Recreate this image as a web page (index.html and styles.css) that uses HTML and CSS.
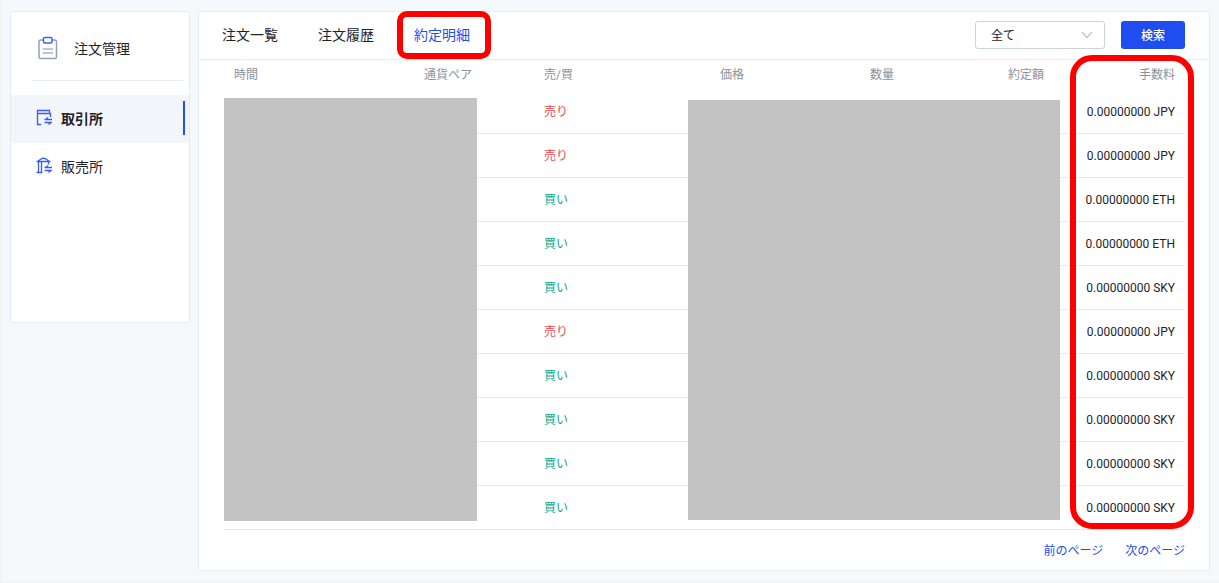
FILE: index.html
```html
<!DOCTYPE html>
<html lang="ja">
<head>
  <meta charset="UTF-8">
  <title>約定明細</title>
  <link rel="stylesheet" href="styles.css">
</head>
<body>

<div class="page">
  <aside class="sidebar">
    <div class="sidebar-title">
      <svg width="20" height="24" viewBox="0 0 20 24" fill="none" stroke-width="1.5">
        <path d="M6 4H2.500Q1 4 1 5.500V21Q1 22.500 2.500 22.500H17Q18.500 22.500 18.500 21V5.500Q18.500 4 17 4H14" stroke="#8fa2b8"/>
        <path d="M4.500 13H15M4.500 17H15" stroke="#a9b8c8"/>
        <rect x="5.500" y="1.500" width="8.500" height="5.500" rx="1.500" stroke="#3f60f5"/>
      </svg>
      <span>注文管理</span>
    </div>
    <nav class="sidebar-nav">
      <a href="#" class="nav-item active">
        <svg width="16" height="18" viewBox="0 0 16 18" fill="none" stroke="#3a5cf5" stroke-width="1.3">
          <path d="M5 15.500H1.500V1.500H13.500V4.500M1.500 4.500H14.500V8"/>
          <path d="M8.500 10.500H16M8.500 13.500H16M9.500 10.500L12 8.500M15 13.500L12.500 15.500"/>
        </svg>
        <span>取引所</span>
      </a>
      <a href="#" class="nav-item">
        <svg width="16" height="18" viewBox="0 0 16 18" fill="none" stroke="#3a5cf5" stroke-width="1.3">
          <path d="M0.500 4.500H14.500M1.500 4.500L5 2Q7.500 0.500 10 2L13.500 4.500M2.500 4.500V15.500M5.500 4.500V15.500M0.500 15.500H6.500M12.500 4.500V7.500"/>
          <path d="M8.500 10.500H16M8.500 13.500H16M9.500 10.500L12 8.500M15 13.500L12.500 15.500"/>
        </svg>
        <span>販売所</span>
      </a>
    </nav>
  </aside>

  <main class="content">
    <div class="toolbar">
      <div class="tabs">
        <a href="#" class="tab">注文一覧</a>
        <a href="#" class="tab">注文履歴</a>
        <a href="#" class="tab active">約定明細</a>
      </div>
      <form class="filter">
        <div class="select-box">
          <select aria-label="通貨ペア">
            <option>全て</option>
          </select>
          <svg class="arrow" width="12" height="8" viewBox="0 0 12 8" fill="none" stroke="#c0c4cc" stroke-width="1.3">
            <path d="M1 1L6 6.500L11 1"/>
          </svg>
        </div>
        <button type="button">検索</button>
      </form>
    </div>

    <div class="orders">
      <table>
        <colgroup>
          <col class="col-time">
          <col class="col-pair">
          <col class="col-side">
          <col class="col-price">
          <col class="col-amount">
          <col class="col-total">
          <col class="col-fee">
        </colgroup>
        <thead>
          <tr>
            <th>時間</th>
            <th>通貨ペア</th>
            <th>売/買</th>
            <th class="right">価格</th>
            <th class="right">数量</th>
            <th class="right">約定額</th>
            <th class="right">手数料</th>
          </tr>
        </thead>
        <tbody>
          <tr><td></td><td></td><td class="sell">売り</td><td></td><td></td><td></td><td class="right">0.00000000 JPY</td></tr>
          <tr><td></td><td></td><td class="sell">売り</td><td></td><td></td><td></td><td class="right">0.00000000 JPY</td></tr>
          <tr><td></td><td></td><td class="buy">買い</td><td></td><td></td><td></td><td class="right">0.00000000 ETH</td></tr>
          <tr><td></td><td></td><td class="buy">買い</td><td></td><td></td><td></td><td class="right">0.00000000 ETH</td></tr>
          <tr><td></td><td></td><td class="buy">買い</td><td></td><td></td><td></td><td class="right">0.00000000 SKY</td></tr>
          <tr><td></td><td></td><td class="sell">売り</td><td></td><td></td><td></td><td class="right">0.00000000 JPY</td></tr>
          <tr><td></td><td></td><td class="buy">買い</td><td></td><td></td><td></td><td class="right">0.00000000 SKY</td></tr>
          <tr><td></td><td></td><td class="buy">買い</td><td></td><td></td><td></td><td class="right">0.00000000 SKY</td></tr>
          <tr><td></td><td></td><td class="buy">買い</td><td></td><td></td><td></td><td class="right">0.00000000 SKY</td></tr>
          <tr><td></td><td></td><td class="buy">買い</td><td></td><td></td><td></td><td class="right">0.00000000 SKY</td></tr>
        </tbody>
      </table>
      <div class="mask mask-left"></div>
      <div class="mask mask-right"></div>
      <div class="fee-frame"></div>
    </div>

    <div class="pager">
      <a href="#">前のページ</a>
      <a href="#">次のページ</a>
    </div>
  </main>
</div>

</body>
</html>
```
FILE: styles.css
```css
* {
  box-sizing: border-box;
}
body {
  margin: 0;
  font-family: Roboto, "Noto Sans CJK JP", sans-serif;
  font-size: 12px;
  color: #1e2329;
  background-color: #f5f9fc;
}
a {
  color: inherit;
  text-decoration: none;
}
.page {
  display: flex;
  align-items: flex-start;
  gap: 8px;
  min-height: 100vh;
  padding: 11px 9px 10px 8px;
  border-left: 2px solid #f3f3f3;
  border-bottom: 2px solid #f3f3f3;
}

/* sidebar */
.sidebar {
  flex: 0 0 180px;
  min-height: 312px;
  background-color: #fff;
  border: 1px solid #e6ebf1;
  border-radius: 2px;
}
.sidebar-title {
  display: flex;
  align-items: center;
  gap: 16px;
  height: 69px;
  margin: 0 6px 14px 21px;
  padding-left: 6px;
  padding-top: 3px;
  font-size: 14px;
  border-bottom: 1px solid #e6ebf5;
}
.nav-item {
  display: flex;
  align-items: center;
  gap: 9px;
  height: 48px;
  padding: 0 4px 3px 25px;
  font-size: 14px;
}
.nav-item.active {
  font-weight: bold;
  background-color: #f2f5fa;
}
.nav-item.active::after {
  content: "";
  width: 2px;
  height: 34px;
  margin-left: auto;
  background-color: #1f4df0;
}

/* main card */
.content {
  flex: 1;
  background-color: #fff;
  border: 1px solid #e6ebf1;
  border-radius: 2px;
}
.toolbar {
  display: flex;
  align-items: center;
  justify-content: space-between;
  height: 48px;
  padding: 0 24px 2px 23px;
  border-bottom: 1px solid #e6ebf1;
}
.tabs {
  display: flex;
  gap: 40px;
}
.tab {
  position: relative;
  font-size: 14px;
  line-height: 20px;
}
.tab.active {
  color: #1f4df0;
}
.tab.active::after {
  content: "";
  position: absolute;
  inset: -14px -21px -14px -17px;
  border: 6px solid #f00;
  border-radius: 10px;
}
.filter {
  display: flex;
  gap: 16px;
  height: 28px;
}
.select-box {
  position: relative;
  width: 130px;
}
.select-box select {
  appearance: none;
  width: 100%;
  height: 28px;
  padding: 3px 15px 0;
  font: inherit;
  color: inherit;
  background-color: #fff;
  border: 1px solid #c6d5e0;
  border-radius: 3px;
}
.arrow {
  position: absolute;
  top: 10px;
  right: 12px;
  pointer-events: none;
}
.filter button {
  width: 64px;
  padding: 0;
  font-family: inherit;
  font-size: 12px;
  font-weight: 500;
  color: #fff;
  background-color: #1f4df0;
  border: none;
  border-radius: 3px;
  cursor: pointer;
}

/* table */
.orders {
  position: relative;
  margin: 0 24px 0 25px;
}
table {
  width: 100%;
  table-layout: fixed;
  border-collapse: separate;
  border-spacing: 0;
}
.col-time {
  width: 190px;
}
.col-pair,
.col-price {
  width: 120px;
}
.col-amount,
.col-total {
  width: 150px;
}
.col-fee {
  width: 131px;
}
th {
  height: 30px;
  padding: 0 10px 3px;
  font-weight: normal;
  text-align: left;
  color: #8d9199;
}
td {
  height: 44px;
  padding: 0 10px;
  border-bottom: 1px solid #e8eaf0;
}
.right {
  text-align: right;
}
.sell {
  color: #f0464a;
}
.buy {
  color: #0ca68a;
}
.sell,
.buy {
  padding-bottom: 2px;
}
.mask {
  position: absolute;
  background-color: #c3c3c3;
}
.mask-left {
  top: 38px;
  bottom: 9px;
  left: 0;
  width: 253px;
}
.mask-right {
  top: 40px;
  bottom: 10px;
  right: 125px;
  width: 372px;
}
.fee-frame {
  position: absolute;
  top: -5px;
  right: -9px;
  bottom: 1px;
  width: 124px;
  border: 6px solid #f00;
  border-radius: 22px;
}

.pager {
  display: flex;
  justify-content: flex-end;
  gap: 22px;
  padding: 12px 24px 10px;
  line-height: 18px;
  color: #1f4df0;
}
```
